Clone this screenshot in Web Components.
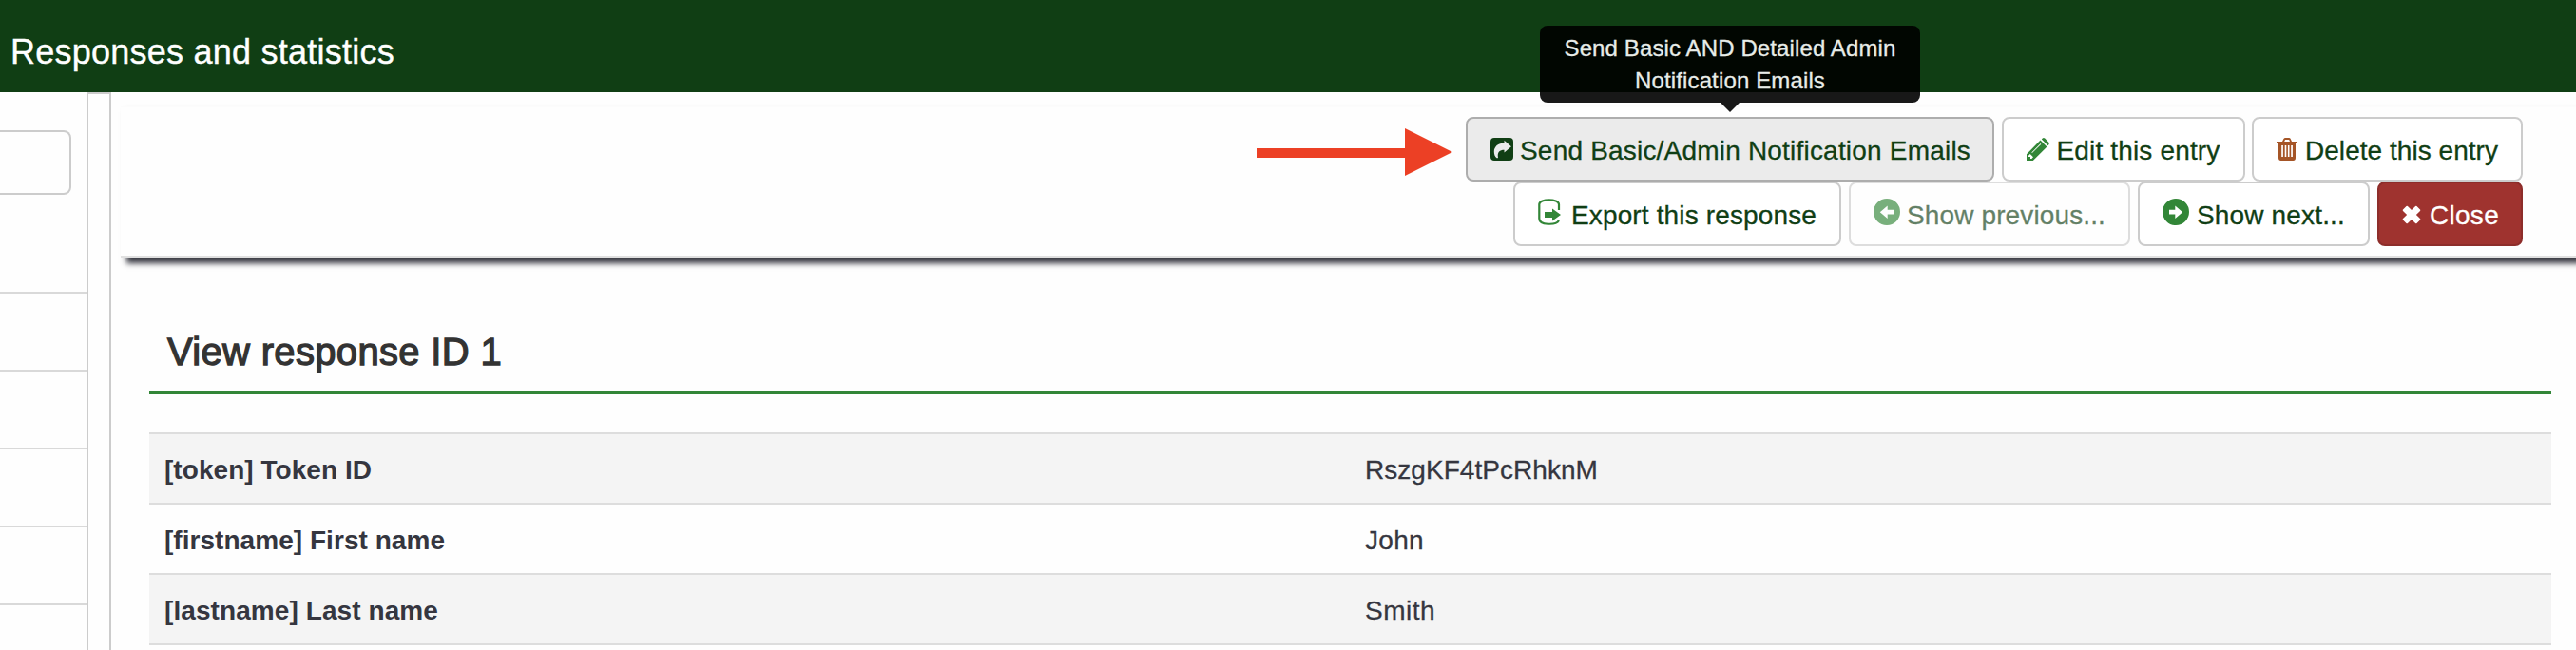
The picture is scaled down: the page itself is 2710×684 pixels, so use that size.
<!DOCTYPE html>
<html lang="en">
<head>
<meta charset="utf-8">
<title>Responses and statistics</title>
<style>
html,body{margin:0;height:100%;overflow:hidden}
body{font-family:"Liberation Sans",Arial,sans-serif;background:#fefefe}
</style>
</head>
<body>
<survey-page></survey-page>
<script>
const ICONS = {
  share: ['0 0 24 24', 24, 24, 0, '<path fill-rule="evenodd" d="M4 0H20a4 4 0 0 1 4 4V20a4 4 0 0 1-4 4H4a4 4 0 0 1-4-4V4a4 4 0 0 1 4-4ZM14.500 2.800V5.600C8 5.600 3.800 9.500 3.800 14.500C3.800 17.500 4.600 19.600 6.600 21.300C8.400 21.500 8 20.800 7.800 19.500C7.400 15.500 9.500 12.800 14.500 12.800V15.600L21.900 9.200Z"/>'],
  pencil: ['0 0 24 24', 24, 24, 0, '<path fill-rule="evenodd" d="M0 24V17.200L14.500 2.600L21.400 9.500L6.800 24ZM2 18.800V20H4V22H5.400L7 20.300L3.700 17ZM5.300 15.500L14.700 6.100L15.300 6.700L5.900 16.100ZM15.800 1.500L16.800.5Q18 -.4 19.200.6L23.300 4.700Q24.400 6 23.400 7.200L22.500 8.200Z"/>'],
  trash: ['0 0 22 24', 22, 24, 0, '<path fill-rule="evenodd" d="M0 4H6L7.300 1.200Q8 0 9.300 0H13Q14.300 0 14.800 1.200L16 4H22V6H20V21Q20 24 17.500 24H4.500Q2 24 2 21V6H0ZM8.200 4H14L13.200 2H9ZM5.200 8V20H6.900V8ZM8.700 8V20H10.300V8ZM11.900 8V20H13.500V8ZM15.200 8V20H16.900V8Z"/>'],
  export: ['0 0 24 28', 24, 28, -2, '<path fill="none" stroke="currentColor" stroke-width="2.200" d="M22 12V6C22 -.2 1.300 -.2 1.300 6V21C1.300 28.300 19 28.300 22 23"/><path d="M7 14H15V10.500L24 17L15 23.500V20H7Z"/>'],
  left: ['0 0 28 28', 28, 28, -2, '<path fill-rule="evenodd" d="M14 0A14 14 0 1 1 14 28A14 14 0 1 1 14 0ZM6.800 14.200L14.700 21V16.500H21V11.800H14.700V7.400Z"/>'],
  right: ['0 0 28 28', 28, 28, -2, '<path fill-rule="evenodd" d="M14 0A14 14 0 1 1 14 28A14 14 0 1 1 14 0ZM21.200 14.200L13.300 21V16.500H7V11.800H13.300V7.400Z"/>'],
  close: ['0 0 20 20', 20, 20, 1, '<path d="M1 4.500L4.500 1Q5.200.4 5.900 1L10 5.100L14.100 1Q14.800.4 15.500 1L19 4.500Q19.600 5.200 19 5.900L14.900 10L19 14.100Q19.600 14.800 19 15.500L15.500 19Q14.800 19.600 14.100 19L10 14.900L5.900 19Q5.200 19.600 4.500 19L1 15.500Q.4 14.800 1 14.100L5.100 10L1 5.900Q.4 5.200 1 4.500Z"/>']
};

function define(name, html, setup) {
  customElements.define(name, class extends HTMLElement {
    connectedCallback() {
      if (this.shadowRoot) return;
      const root = this.attachShadow({ mode: 'open' });
      root.innerHTML = html;
      if (setup) setup(this, root);
    }
  });
}

/* One line of text tracked to a given advance width. */
define('fit-text', `<style>:host{display:inline-block;white-space:nowrap}</style><span><slot></slot></span>`, (el, root) => {
  const target = +el.getAttribute('width');
  const run = root.querySelector('span');
  const natural = run.getBoundingClientRect().width;
  run.style.letterSpacing = (target - natural) / el.textContent.length + 'px';
});

define('app-header', `<style>
:host{display:block;height:97px;box-sizing:border-box;padding:34px 0 0 11px;background:#103e14;color:#fff;font-size:36px;line-height:42px;-webkit-text-stroke:.4px #fff}
</style><slot></slot>`);

define('side-panel', `<style>
:host{display:flex;flex-direction:column;width:91px;flex:none}
.search{height:68px;width:75px;margin-top:40px;box-sizing:border-box;border:2px solid #ccc;border-left:0;border-radius:0 8px 8px 0;flex:none}
.list{margin-top:102px}
.item{height:82px;box-sizing:border-box;border-top:2px solid #d9d9d9}
</style><div class="search"></div><div class="list">${'<div class="item"></div>'.repeat(5)}</div>`);

define('resize-handle', `<style>:host{display:block;width:26px;height:600px;box-sizing:border-box;border:2px solid #ccc;flex:none}</style>`);

define('tool-button', `<style>
:host{display:flex;align-items:center;position:relative;box-sizing:border-box;height:68px;padding:2px 0 0 24px;border:2px solid #ccc;border-radius:8px;background:#fff;color:#103e14;font-size:28px;line-height:40px}
:host([kind=active]){background:#ebebeb;border-color:#adadad}
:host([kind=disabled]){opacity:.65}
:host([kind=danger]){background:#9f332f;border-color:#8d2d2a;color:#fff}
svg{display:block;fill:currentColor;flex:none;overflow:visible;position:relative}
.l{flex:none;padding-top:1px;-webkit-text-stroke:.3px currentColor}
</style><svg></svg><span class="l"><slot></slot></span><slot name="tip"></slot>`, (el, root) => {
  const [box, w, h, dy, body] = ICONS[el.getAttribute('icon')];
  const svg = root.querySelector('svg');
  svg.setAttribute('viewBox', box);
  svg.setAttribute('width', w);
  svg.setAttribute('height', h);
  svg.style.top = dy - 1 + 'px';
  svg.style.color = el.getAttribute('tint') || 'inherit';
  svg.innerHTML = body;
  el.style.width = el.getAttribute('width') + 'px';
  root.querySelector('.l').style.marginLeft = el.getAttribute('gap') + 'px';
});

define('tool-tip', `<style>
:host{position:absolute;left:76px;top:-98px;width:400px;height:81px;box-sizing:border-box;padding-top:7px;border-radius:8px;background:#000;opacity:.9;color:#fff;font-size:24px;line-height:34px;text-align:center;-webkit-text-stroke:.3px #fff}
:host::after{content:"";position:absolute;left:190px;top:81px;border:10px solid transparent;border-top-color:#000;border-bottom:0}
</style><slot></slot>`);

define('red-arrow', `<style>:host{display:block;width:206px;height:50px;margin:12px 14px 0 0}svg{display:block}</style>
<svg width="206" height="50"><path fill="#ec4025" d="M0 21H156V0L206 25L156 50V31H0Z"/></svg>`);

define('tool-bar', `<style>
:host{display:flex;flex-direction:column;align-items:flex-end;box-sizing:border-box;height:159px;margin:15px 0 0 10px;padding:10px 56px 0 0;border-top:1px solid #fcfcfc;border-bottom:2px solid #e0e0e0;background:#fefefe;box-shadow:6px 6px 6px #35363f}
.r{display:flex;gap:8px}
.n{gap:7.500px}
.f{display:flex}
</style>
<div class="f"><red-arrow></red-arrow><div class="r n">
<tool-button icon="share" kind="active" width="556" gap="7"><fit-text width="474">Send Basic/Admin Notification Emails</fit-text><tool-tip slot="tip"><fit-text width="349">Send Basic AND Detailed Admin</fit-text><br><fit-text width="200">Notification Emails</fit-text></tool-tip></tool-button>
<tool-button icon="pencil" tint="#328637" width="256" gap="8"><fit-text width="172">Edit this entry</fit-text></tool-button>
<tool-button icon="trash" tint="#a55527" width="285" gap="8"><fit-text width="203">Delete this entry</fit-text></tool-button>
</div></div>
<div class="r">
<tool-button icon="export" tint="#328637" width="345" gap="11"><fit-text width="258">Export this response</fit-text></tool-button>
<tool-button icon="left" tint="#328637" kind="disabled" width="296" gap="7"><fit-text width="209">Show previous...</fit-text></tool-button>
<tool-button icon="right" tint="#328637" width="244" gap="8"><fit-text width="156">Show next...</fit-text></tool-button>
<tool-button icon="close" kind="danger" width="153" gap="9"><fit-text width="73">Close</fit-text></tool-button>
</div>`);

define('page-title', `<style>
:host{display:block;height:104px;box-sizing:border-box;padding:37px 0 0 19px;border-bottom:4px solid #328637;color:#333;font-size:40px;line-height:44px;-webkit-text-stroke:1.300px #333}
</style><slot></slot>`);

define('data-row', `<style>
:host{display:grid;grid-template-columns:1264px 1fr;height:74px;box-sizing:border-box;border-top:2px solid #ddd;padding-top:18px;color:#35363f;font-size:28px;line-height:40px}
:host([odd]){background:#f4f4f4}
.k{padding-left:16px;font-weight:700}
.v{padding-left:15px;-webkit-text-stroke:.3px currentColor}
</style><div class="k"><slot name="key"></slot></div><div class="v"><slot></slot></div>`);

define('response-view', `<style>
:host{display:block;margin:40px 26px 0 40px}
.t{margin-top:40px}
</style>
<page-title><fit-text width="352">View response ID 1</fit-text></page-title>
<div class="t">
<data-row odd><fit-text slot="key" width="218">[token] Token ID</fit-text><fit-text width="245">RszgKF4tPcRhknM</fit-text></data-row>
<data-row><fit-text slot="key" width="295">[firstname] First name</fit-text><fit-text width="62">John</fit-text></data-row>
<data-row odd><fit-text slot="key" width="288">[lastname] Last name</fit-text><fit-text width="74">Smith</fit-text></data-row>
<data-row></data-row>
</div>`);

define('survey-page', `<style>
:host{display:block;height:684px;overflow:hidden}
.b{display:flex}
main{flex:1;min-width:0}
</style>
<app-header><fit-text width="404">Responses and statistics</fit-text></app-header>
<div class="b"><side-panel></side-panel><resize-handle></resize-handle><main><tool-bar></tool-bar><response-view></response-view></main></div>`);
</script>
</body>
</html>
